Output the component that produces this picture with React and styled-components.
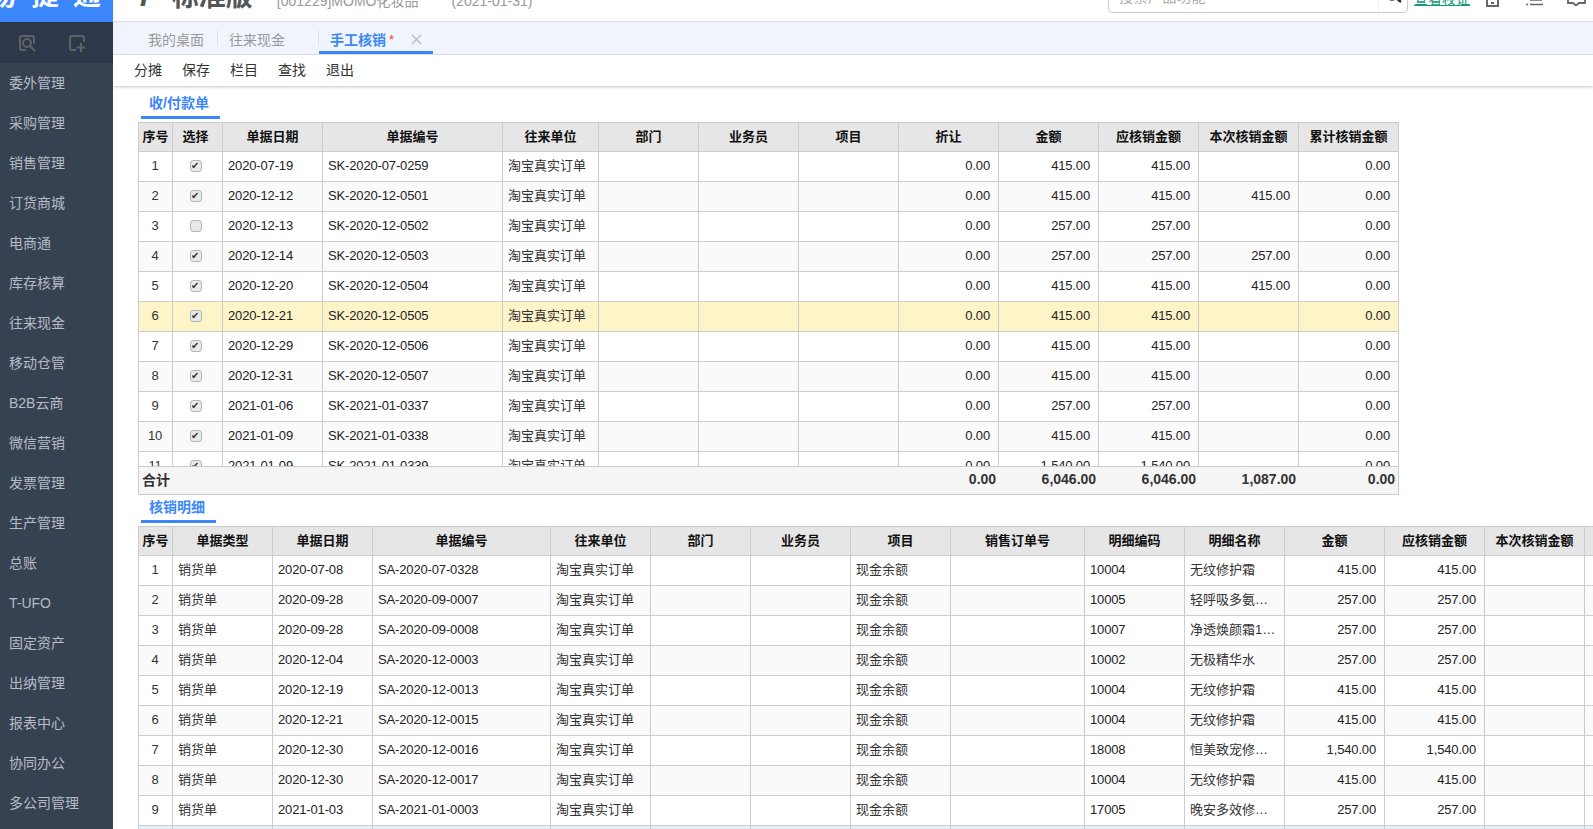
import React from 'react';
import styled, { createGlobalStyle } from 'styled-components';

const GlobalStyle = createGlobalStyle`
  html, body {
    margin: 0;
    height: 100%;
    overflow: hidden;
    background: #fff;
    font-family: "Liberation Sans", "Noto Sans CJK SC", sans-serif;
  }
`;

const Page = styled.div`
  display: flex;
  width: 100vw;
  height: 100vh;
  overflow: hidden;
`;

const Sidebar = styled.aside`
  flex: 0 0 113px;
  background: #364252;
  display: flex;
  flex-direction: column;
  overflow: hidden;
`;

const Logo = styled.div`
  flex: 0 0 22px;
  box-sizing: border-box;
  background: #3b87f9;
  display: flex;
  align-items: flex-end;
  overflow: hidden;
  padding-bottom: 12px;
  color: #fff;
`;

const LogoText = styled.span`
  font-size: 28px;
  line-height: 28px;
  font-weight: 700;
  letter-spacing: 14px;
  white-space: nowrap;
  margin-left: -11px;
`;

const QuickIcons = styled.div`
  flex: 0 0 41px;
  background: #2d394a;
  display: flex;
  align-items: center;
  padding-left: 18px;
  gap: 32px;
  color: #5f6265;
`;

const MenuItem = styled.div`
  flex: 0 0 40px;
  line-height: 40px;
  padding-left: 9px;
  font-size: 14px;
  color: #b7bcc4;
  white-space: nowrap;
`;

const Main = styled.main`
  flex: 1;
  min-width: 0;
  display: flex;
  flex-direction: column;
  overflow: hidden;
`;

const Header = styled.header`
  flex: 0 0 22px;
  box-sizing: border-box;
  display: flex;
  align-items: flex-end;
  overflow: hidden;
  padding-left: 22px;
  padding-right: 7px;
  border-bottom: 1px solid #dcdfe3;
`;

const Edition = styled.span`
  font-size: 27px;
  line-height: 28px;
  font-weight: 700;
  color: #555;
  white-space: nowrap;
  margin-bottom: 10px;
`;

const Mark = styled.i`
  font-family: "Liberation Sans", sans-serif;
  font-weight: 700;
  font-size: 30px;
  margin-right: 8px;
`;

const MarkPlus = styled.span`
  font-size: 18px;
  vertical-align: 6px;
`;

const Company = styled.span`
  font-size: 14px;
  line-height: 16px;
  color: #999;
  white-space: nowrap;
  margin-left: ${p => p.$left}px;
  margin-bottom: 12px;
`;

const SearchBox = styled.div`
  margin-left: auto;
  width: 300px;
  height: 40px;
  box-sizing: border-box;
  margin-bottom: 8px;
  border: 1px solid #ccc;
  border-radius: 4px;
  display: flex;
  align-items: flex-end;
  padding-left: 10px;
  font-size: 14px;
  letter-spacing: 0.5px;
  line-height: 20px;
  color: #aaa;
  flex-shrink: 0;
`;

const SearchHint = styled.span`
  flex: 1;
  padding-bottom: 5px;
`;

const SearchButton = styled.span`
  flex: 0 0 29px;
  height: 100%;
  box-sizing: border-box;
  border-left: 1px solid #f0f0f0;
  display: flex;
  align-items: flex-end;
  justify-content: center;
  padding-bottom: 7px;
  color: #333;
`;

const LicenseLink = styled.a`
  margin-left: 6px;
  font-size: 14px;
  line-height: 18px;
  color: #129a7a;
  text-decoration: underline;
  white-space: nowrap;
  margin-bottom: 13px;
`;

const HeadIcon = styled.span`
  display: flex;
  margin-left: ${p => p.$left}px;
  margin-bottom: ${p => p.$bottom}px;
  color: #666;
`;

const TabBar = styled.nav`
  flex: 0 0 32px;
  box-sizing: border-box;
  background: #f0f5fd;
  border-bottom: 1px solid #e2e6ea;
  display: flex;
  align-items: center;
  padding-left: 24px;
  font-size: 14px;
`;

const Tab = styled.div`
  height: 32px;
  box-sizing: border-box;
  display: flex;
  align-items: center;
  padding-left: 11px;
  padding-right: ${p => p.$right}px;
  color: ${p => (p.$active ? '#3b87f9' : '#999')};
  font-weight: ${p => (p.$active ? 700 : 400)};
  border-bottom: 3px solid ${p => (p.$active ? '#3b87f9' : 'transparent')};
  padding-top: 5px;
  white-space: nowrap;
`;

const TabDivider = styled.span`
  width: 1px;
  height: 16px;
  background: #dfe2e6;
`;

const Star = styled.span`
  color: #f33;
  font-weight: 400;
  font-size: 13px;
  margin-left: 3px;
  margin-right: 17px;
`;

const Toolbar = styled.div`
  flex: 0 0 31px;
  box-sizing: border-box;
  display: flex;
  align-items: center;
  gap: 20px;
  padding: 0 0 4px 21px;
  font-size: 14px;
  color: #333;
  box-shadow: 0 1px 3px rgba(0, 0, 0, 0.22);
  position: relative;
`;

const Content = styled.section`
  flex: 1;
  min-height: 0;
  padding-left: 25px;
  overflow: hidden;
`;

const SectionTitle = styled.div`
  display: inline-block;
  vertical-align: top;
  margin-left: 3px;
  height: ${p => p.$height}px;
  box-sizing: border-box;
  padding: ${p => p.$top}px 11px 0 8px;
  font-size: 14px;
  line-height: 20px;
  font-weight: 700;
  color: #3b87f9;
  border-bottom: 3px solid #3b87f9;
`;

const TitleRow = styled.div`
  height: ${p => p.$height}px;
`;

const Clip = styled.div`
  height: ${p => p.$height}px;
  width: max-content;
  overflow: hidden;
`;

const Grid = styled.table`
  table-layout: fixed;
  border-collapse: separate;
  border-spacing: 0;
  border-left: 1px solid #ccc;
  border-top: 1px solid #ccc;
  font-size: 13px;
  color: #222;
`;

const HeadCell = styled.th`
  height: 29px;
  box-sizing: border-box;
  padding: 0 ${p => p.$shift || 0}px 4px 0;
  background: #e6e6e6;
  border-right: 1px solid #ccc;
  border-bottom: 1px solid #ccc;
  font-weight: 700;
  text-align: center;
  color: #111;
  white-space: nowrap;
  overflow: hidden;
`;

const Row = styled.tr`
  background: ${p => (p.$mark ? '#fdf4c8' : p.$blue ? '#e3effc' : p.$even ? '#fafafa' : '#fff')};
`;

const Cell = styled.td`
  height: 30px;
  box-sizing: border-box;
  padding: 0 8px ${p => (p.$zh ? 5 : 3)}px 5px;
  border-right: 1px solid #ccc;
  border-bottom: 1px solid #ccc;
  white-space: nowrap;
  overflow: hidden;
  text-overflow: ellipsis;
  text-align: ${p => p.$align || 'left'};
  color: ${p => (p.$zh ? '#333' : '#222')};
  letter-spacing: ${p => (p.$zh ? 0 : -0.15)}px;
`;

const SeqCell = styled(Cell)`
  padding: 0 1px 3px 0;
  text-align: center;
  color: #333;
`;

const Check = styled.input.attrs({ type: 'checkbox', readOnly: true })`
  appearance: none;
  display: block;
  width: 12px;
  height: 12px;
  margin: 1px 0 0 17px;
  box-sizing: border-box;
  border: 1px solid #b5b5b5;
  border-radius: 3px;
  background: #e9e9e9;
  position: relative;

  &:checked::after {
    content: "✔";
    position: absolute;
    left: 0;
    top: -1px;
    font-family: "DejaVu Sans", sans-serif;
    font-size: 10px;
    line-height: 12px;
    color: #333;
  }
`;

const Footer = styled.table`
  table-layout: fixed;
  border-collapse: separate;
  border-spacing: 0;
  background: #f5f5f5;
  border: 1px solid #ccc;
  border-top-width: 1px;
  font-size: 14px;
  font-weight: 700;
  color: #333;
`;

const FootCell = styled.td`
  height: 27px;
  box-sizing: border-box;
  padding: 0 3px 4px 3px;
  text-align: ${p => p.$align || 'right'};
  white-space: nowrap;
`;

const menus = ['委外管理', '采购管理', '销售管理', '订货商城', '电商通', '库存核算', '往来现金', '移动仓管', 'B2B云商', '微信营销', '发票管理', '生产管理', '总账', 'T-UFO', '固定资产', '出纳管理', '报表中心', '协同办公', '多公司管理'];

const topCols = [34, 50, 100, 180, 96, 100, 100, 100, 100, 100, 100, 100, 100];
const footCols = [34, 50, 100, 180, 96, 100, 100, 100, 100, 100, 100, 100, 99];
const topHead = ['序号', '选择', '单据日期', '单据编号', '往来单位', '部门', '业务员', '项目', '折让', '金额', '应核销金额', '本次核销金额', '累计核销金额'];
const topRows = [
  [true, '2020-07-19', 'SK-2020-07-0259', '415.00', ''],
  [true, '2020-12-12', 'SK-2020-12-0501', '415.00', '415.00'],
  [false, '2020-12-13', 'SK-2020-12-0502', '257.00', ''],
  [true, '2020-12-14', 'SK-2020-12-0503', '257.00', '257.00'],
  [true, '2020-12-20', 'SK-2020-12-0504', '415.00', '415.00'],
  [true, '2020-12-21', 'SK-2020-12-0505', '415.00', ''],
  [true, '2020-12-29', 'SK-2020-12-0506', '415.00', ''],
  [true, '2020-12-31', 'SK-2020-12-0507', '415.00', ''],
  [true, '2021-01-06', 'SK-2021-01-0337', '257.00', ''],
  [true, '2021-01-09', 'SK-2021-01-0338', '415.00', ''],
  [true, '2021-01-09', 'SK-2021-01-0339', '1,540.00', ''],
];

const bottomCols = [34, 100, 100, 178, 100, 100, 100, 100, 134, 100, 100, 100, 100, 100, 100];
const bottomHead = ['序号', '单据类型', '单据日期', '单据编号', '往来单位', '部门', '业务员', '项目', '销售订单号', '明细编码', '明细名称', '金额', '应核销金额', '本次核销金额', '累计核销金额'];
const bottomRows = [
  ['2020-07-08', 'SA-2020-07-0328', '10004', '无纹修护霜', '415.00'],
  ['2020-09-28', 'SA-2020-09-0007', '10005', '轻呼吸多氨基酸洁面', '257.00'],
  ['2020-09-28', 'SA-2020-09-0008', '10007', '净透焕颜霜100g', '257.00'],
  ['2020-12-04', 'SA-2020-12-0003', '10002', '无极精华水', '257.00'],
  ['2020-12-19', 'SA-2020-12-0013', '10004', '无纹修护霜', '415.00'],
  ['2020-12-21', 'SA-2020-12-0015', '10004', '无纹修护霜', '415.00'],
  ['2020-12-30', 'SA-2020-12-0016', '18008', '恒美致宠修护套装', '1,540.00'],
  ['2020-12-30', 'SA-2020-12-0017', '10004', '无纹修护霜', '415.00'],
  ['2021-01-03', 'SA-2021-01-0003', '17005', '晚安多效修护霜', '257.00'],
];

const sum = list => list.reduce((a, b) => a + b, 0);

const Cols = ({ list }) => (
  <colgroup>
    {list.map((w, i) => <col key={i} width={w} />)}
  </colgroup>
);

const FindIcon = () => (
  <svg width="18" height="18" viewBox="0 0 18 18" fill="none" stroke="currentColor" strokeWidth="2">
    <path d="M8 16H4a2 2 0 0 1-2-2V4a2 2 0 0 1 2-2h10a2 2 0 0 1 2 2v6" />
    <circle cx="9" cy="9" r="4" />
    <path d="M12 12l5 5" />
  </svg>
);

const AddIcon = () => (
  <svg width="18" height="18" viewBox="0 0 18 18" fill="none" stroke="currentColor" strokeWidth="2">
    <path d="M8 16H4a2 2 0 0 1-2-2V4a2 2 0 0 1 2-2h10a2 2 0 0 1 2 2v4" />
    <path d="M13 9v9M8.5 13.5H17" />
  </svg>
);

const TopTable = () => (
  <>
    <Clip $height={344}>
      <Grid style={{ width: sum(topCols) + 1 }}>
        <Cols list={topCols} />
        <thead>
          <tr>{topHead.map((h, i) => <HeadCell key={h} $shift={i === 1 ? 4 : 0}>{h}</HeadCell>)}</tr>
        </thead>
        <tbody>
          {topRows.map((r, i) => (
            <Row key={i} $even={i % 2 === 1} $mark={i === 5}>
              <SeqCell>{i + 1}</SeqCell>
              <SeqCell><Check defaultChecked={r[0]} /></SeqCell>
              <Cell>{r[1]}</Cell>
              <Cell>{r[2]}</Cell>
              <Cell $zh>淘宝真实订单</Cell>
              <Cell />
              <Cell />
              <Cell />
              <Cell $align="right">0.00</Cell>
              <Cell $align="right">{r[3]}</Cell>
              <Cell $align="right">{r[3]}</Cell>
              <Cell $align="right">{r[4]}</Cell>
              <Cell $align="right">0.00</Cell>
            </Row>
          ))}
        </tbody>
      </Grid>
    </Clip>
    <Footer style={{ width: sum(topCols) + 1 }}>
      <Cols list={footCols} />
      <tbody>
        <tr>
          <FootCell $align="left">合计</FootCell>
          <FootCell colSpan={7} />
          <FootCell>0.00</FootCell>
          <FootCell>6,046.00</FootCell>
          <FootCell>6,046.00</FootCell>
          <FootCell>1,087.00</FootCell>
          <FootCell>0.00</FootCell>
        </tr>
      </tbody>
    </Footer>
  </>
);

const BottomTable = () => (
  <Grid style={{ width: sum(bottomCols) + 1 }}>
    <Cols list={bottomCols} />
    <thead>
      <tr>{bottomHead.map(h => <HeadCell key={h}>{h}</HeadCell>)}</tr>
    </thead>
    <tbody>
      {bottomRows.map((r, i) => (
        <Row key={i} $even={i % 2 === 1}>
          <SeqCell>{i + 1}</SeqCell>
          <Cell $zh>销货单</Cell>
          <Cell>{r[0]}</Cell>
          <Cell>{r[1]}</Cell>
          <Cell $zh>淘宝真实订单</Cell>
          <Cell />
          <Cell />
          <Cell $zh>现金余额</Cell>
          <Cell />
          <Cell>{r[2]}</Cell>
          <Cell $zh>{r[3]}</Cell>
          <Cell $align="right">{r[4]}</Cell>
          <Cell $align="right">{r[4]}</Cell>
          <Cell />
          <Cell />
        </Row>
      ))}
      <Row $blue>
        {bottomCols.map((w, i) => <Cell key={i} />)}
      </Row>
    </tbody>
  </Grid>
);

export default function App() {
  return (
    <Page>
      <GlobalStyle />
      <Sidebar>
        <Logo><LogoText>易捷通</LogoText></Logo>
        <QuickIcons>
          <FindIcon />
          <AddIcon />
        </QuickIcons>
        {menus.map(m => <MenuItem key={m}>{m}</MenuItem>)}
      </Sidebar>
      <Main>
        <Header>
          <Edition><Mark>T<MarkPlus>+</MarkPlus></Mark>标准版</Edition>
          <Company $left={24}>[001229]MOMO化妆品</Company>
          <Company $left={33}>(2021-01-31)</Company>
          <SearchBox>
            <SearchHint>搜索产品功能</SearchHint>
            <SearchButton>
              <svg width="18" height="18" viewBox="0 0 18 18" fill="none" stroke="currentColor" strokeWidth="2.4">
                <circle cx="8" cy="7" r="5.5" />
                <path d="M12 11l5 4" />
              </svg>
            </SearchButton>
          </SearchBox>
          <LicenseLink>查看权证</LicenseLink>
          <HeadIcon $left={16} $bottom={14}>
            <svg width="13" height="14" viewBox="0 0 13 14" fill="none" stroke="currentColor" strokeWidth="2">
              <path d="M1 1h11v12H1z" />
              <path d="M5 10h3" />
            </svg>
          </HeadIcon>
          <HeadIcon $left={27} $bottom={15}>
            <svg width="17" height="14" viewBox="0 0 17 14" fill="none" stroke="currentColor" strokeWidth="1.6">
              <path d="M4 3h12M4 8h12M4 12.5h13M0 12.5h2" />
            </svg>
          </HeadIcon>
          <HeadIcon $left={24} $bottom={15}>
            <svg width="19" height="14" viewBox="0 0 19 14" fill="none" stroke="currentColor" strokeWidth="1.8">
              <path d="M1 1v10h5l3 2.5 3-2.5h6V1z" />
            </svg>
          </HeadIcon>
        </Header>
        <TabBar>
          <Tab $right={13}>我的桌面</Tab>
          <TabDivider />
          <Tab $right={33}>往来现金</Tab>
          <TabDivider />
          <Tab $active $right={11}>
            手工核销<Star>*</Star>
            <svg width="11" height="11" viewBox="0 0 11 11" stroke="#bbb" strokeWidth="1.4" fill="none">
              <path d="M1 1l9 9M10 1l-9 9" />
            </svg>
          </Tab>
        </TabBar>
        <Toolbar>
          <span>分摊</span>
          <span>保存</span>
          <span>栏目</span>
          <span>查找</span>
          <span>退出</span>
        </Toolbar>
        <Content>
          <TitleRow $height={36}>
            <SectionTitle $height={33} $top={7}>收/付款单</SectionTitle>
          </TitleRow>
          <TopTable />
          <TitleRow $height={31}>
            <SectionTitle $height={28} $top={2}>核销明细</SectionTitle>
          </TitleRow>
          <BottomTable />
        </Content>
      </Main>
    </Page>
  );
}
